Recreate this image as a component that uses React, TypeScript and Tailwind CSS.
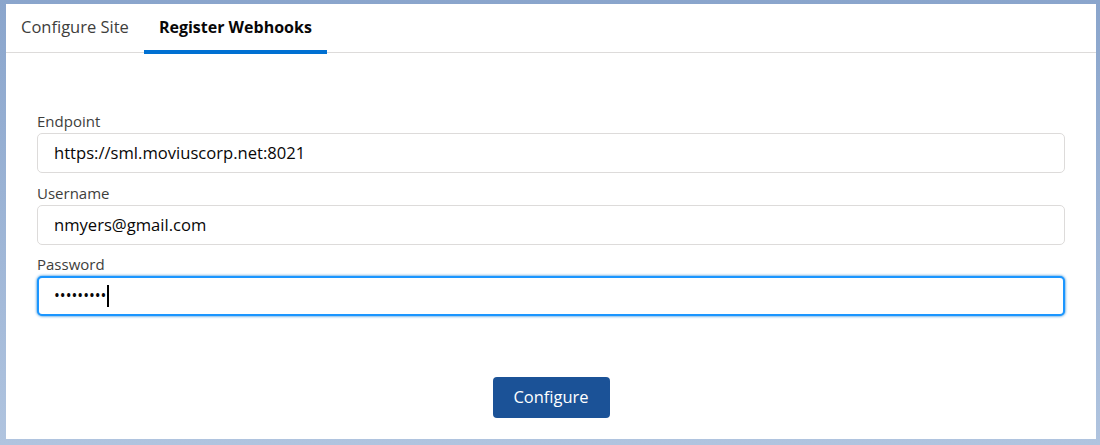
import React from "react";

function Field({ label, children, focused }: { label: string; children: React.ReactNode; focused?: boolean }) {
  return (
    <div className="flex flex-col">
      <div className="text-[15px] leading-[20px] text-[#3e3e3c] mb-[2px]">{label}</div>
      <div
        className={
          "h-[40px] rounded-[5px] bg-white flex items-center text-[16.6px] text-[#080707] " +
          (focused
            ? "border-2 border-[#1b96ff] shadow-[0_0_3px_#0176d3] pl-[15px]"
            : "border border-[#dddbda] pl-[16px]")
        }
      >
        {children}
      </div>
    </div>
  );
}

export default function App() {
  return (
    <div
      className="w-[1100px] h-[445px] pt-[4px] pl-[6px] pr-[4px] pb-[6px] bg-gradient-to-b from-[#8aa5cc] to-[#b0c4df]"
      style={{ fontFamily: '"Open Sans", "Liberation Sans", sans-serif' }}
    >
      <div className="h-full bg-white flex flex-col">
        <div className="h-[49px] flex items-stretch border-b border-[#dddbda]">
          <div className="px-[15px] flex items-center text-[16.5px] text-[#3e3e3c] pb-[2px]">Configure Site</div>
          <div className="relative px-[15px] flex items-center text-[16px] font-bold text-[#080707] pb-[2px]">
            Register Webhooks
            <div className="absolute left-0 right-0 bottom-[-2px] h-[4px] bg-[#0070d2]" />
          </div>
        </div>
        <div className="px-[31px] pt-[58px] flex flex-col gap-[9px]">
          <Field label="Endpoint">https://sml.moviuscorp.net:8021</Field>
          <div className="mt-[1px]">
            <Field label="Username">nmyers@gmail.com</Field>
          </div>
          <Field label="Password" focused>
            <span className="text-[15.5px]">•••••••••</span>
            <span className="ml-[1px] w-[1.5px] h-[22px] bg-black" />
          </Field>
        </div>
        <div className="flex justify-center mt-[61px]">
          <button className="w-[117px] h-[41px] rounded-[4px] bg-[#1b5297] text-white text-[16.5px]">
            Configure
          </button>
        </div>
      </div>
    </div>
  );
}
